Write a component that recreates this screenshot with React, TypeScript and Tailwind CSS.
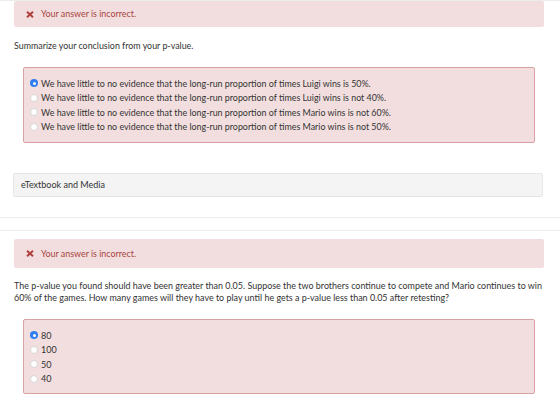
import React from 'react';

const Cross = () => (
  <svg width="8" height="7" viewBox="0 0 8 7" className="shrink-0">
    <path d="M1 0.8 L7 6.2 M7 0.8 L1 6.2" stroke="#b0403c" strokeWidth="2" strokeLinecap="butt" />
  </svg>
);

const Radio = ({ checked }: { checked?: boolean }) =>
  checked ? (
    <span className="w-[8px] h-[8px] rounded-full bg-[#2f7ff0] flex items-center justify-center shrink-0">
      <span className="w-[3px] h-[3px] rounded-full bg-white" />
    </span>
  ) : (
    <span className="w-[8px] h-[8px] rounded-full bg-white border border-[#d6d6d6] shrink-0" />
  );

const Feedback = ({ className }: { className: string }) => (
  <div className={`w-[530px] bg-[#f2dede] rounded-[2px] flex items-center gap-[7px] pl-[12px] ${className}`}>
    <Cross />
    <span className="text-[8.9px] text-[#a94442]">Your answer is incorrect.</span>
  </div>
);

const Options = ({ items, className }: { items: string[]; className: string }) => (
  <div className={`ml-[9px] w-[512px] bg-[#f2dede] border border-[#d9a2a2] rounded-[2px] pl-[6px] ${className}`}>
    {items.map((t, i) => (
      <div key={t} className="flex items-center gap-[3px] h-[14.5px]">
        <Radio checked={i === 0} />
        <span className="text-[#333]">{t}</span>
      </div>
    ))}
  </div>
);

export default function App() {
  return (
    <div
      className="w-[560px] h-[401px] bg-white overflow-hidden border-t border-[#ececec] text-[#333]"
      style={{ fontFamily: 'Lato, "Open Sans", sans-serif' }}
    >
      <div className="px-[14px]">
        <Feedback className="h-[26px]" />
        <p className="mt-[13px] text-[8.9px] leading-[12px]">Summarize your conclusion from your p-value.</p>
        <Options
          className="mt-[15px] pt-[8px] pb-[8px] text-[8.9px]"
          items={[
            'We have little to no evidence that the long-run proportion of times Luigi wins is 50%.',
            'We have little to no evidence that the long-run proportion of times Luigi wins is not 40%.',
            'We have little to no evidence that the long-run proportion of times Mario wins is not 60%.',
            'We have little to no evidence that the long-run proportion of times Mario wins is not 50%.',
          ]}
        />
        <div className="-ml-[1px] mt-[30px] w-[530px] h-[24px] bg-[#f4f4f4] border border-[#e6e6e6] rounded-[2px] flex items-center pl-[7px] text-[9px]">
          eTextbook and Media
        </div>
      </div>
      <div className="mt-[20px] border-t border-[#ececec]" />
      <div className="mt-[12px] border-t border-[#ececec] px-[14px]">
        <Feedback className="mt-[8px] h-[29px]" />
        <p className="mt-[12px] w-[530px] text-[8.95px] leading-[12px]">
          The p-value you found should have been greater than 0.05. Suppose the two brothers continue to compete and Mario continues to win 60% of the games. How many games will they have to play until he gets a p-value less than 0.05 after retesting?
        </p>
        <Options
          className="mt-[15px] pt-[8px] pb-[7px] text-[9px]"
          items={['80', '100', '50', '40']}
        />
      </div>
    </div>
  );
}
